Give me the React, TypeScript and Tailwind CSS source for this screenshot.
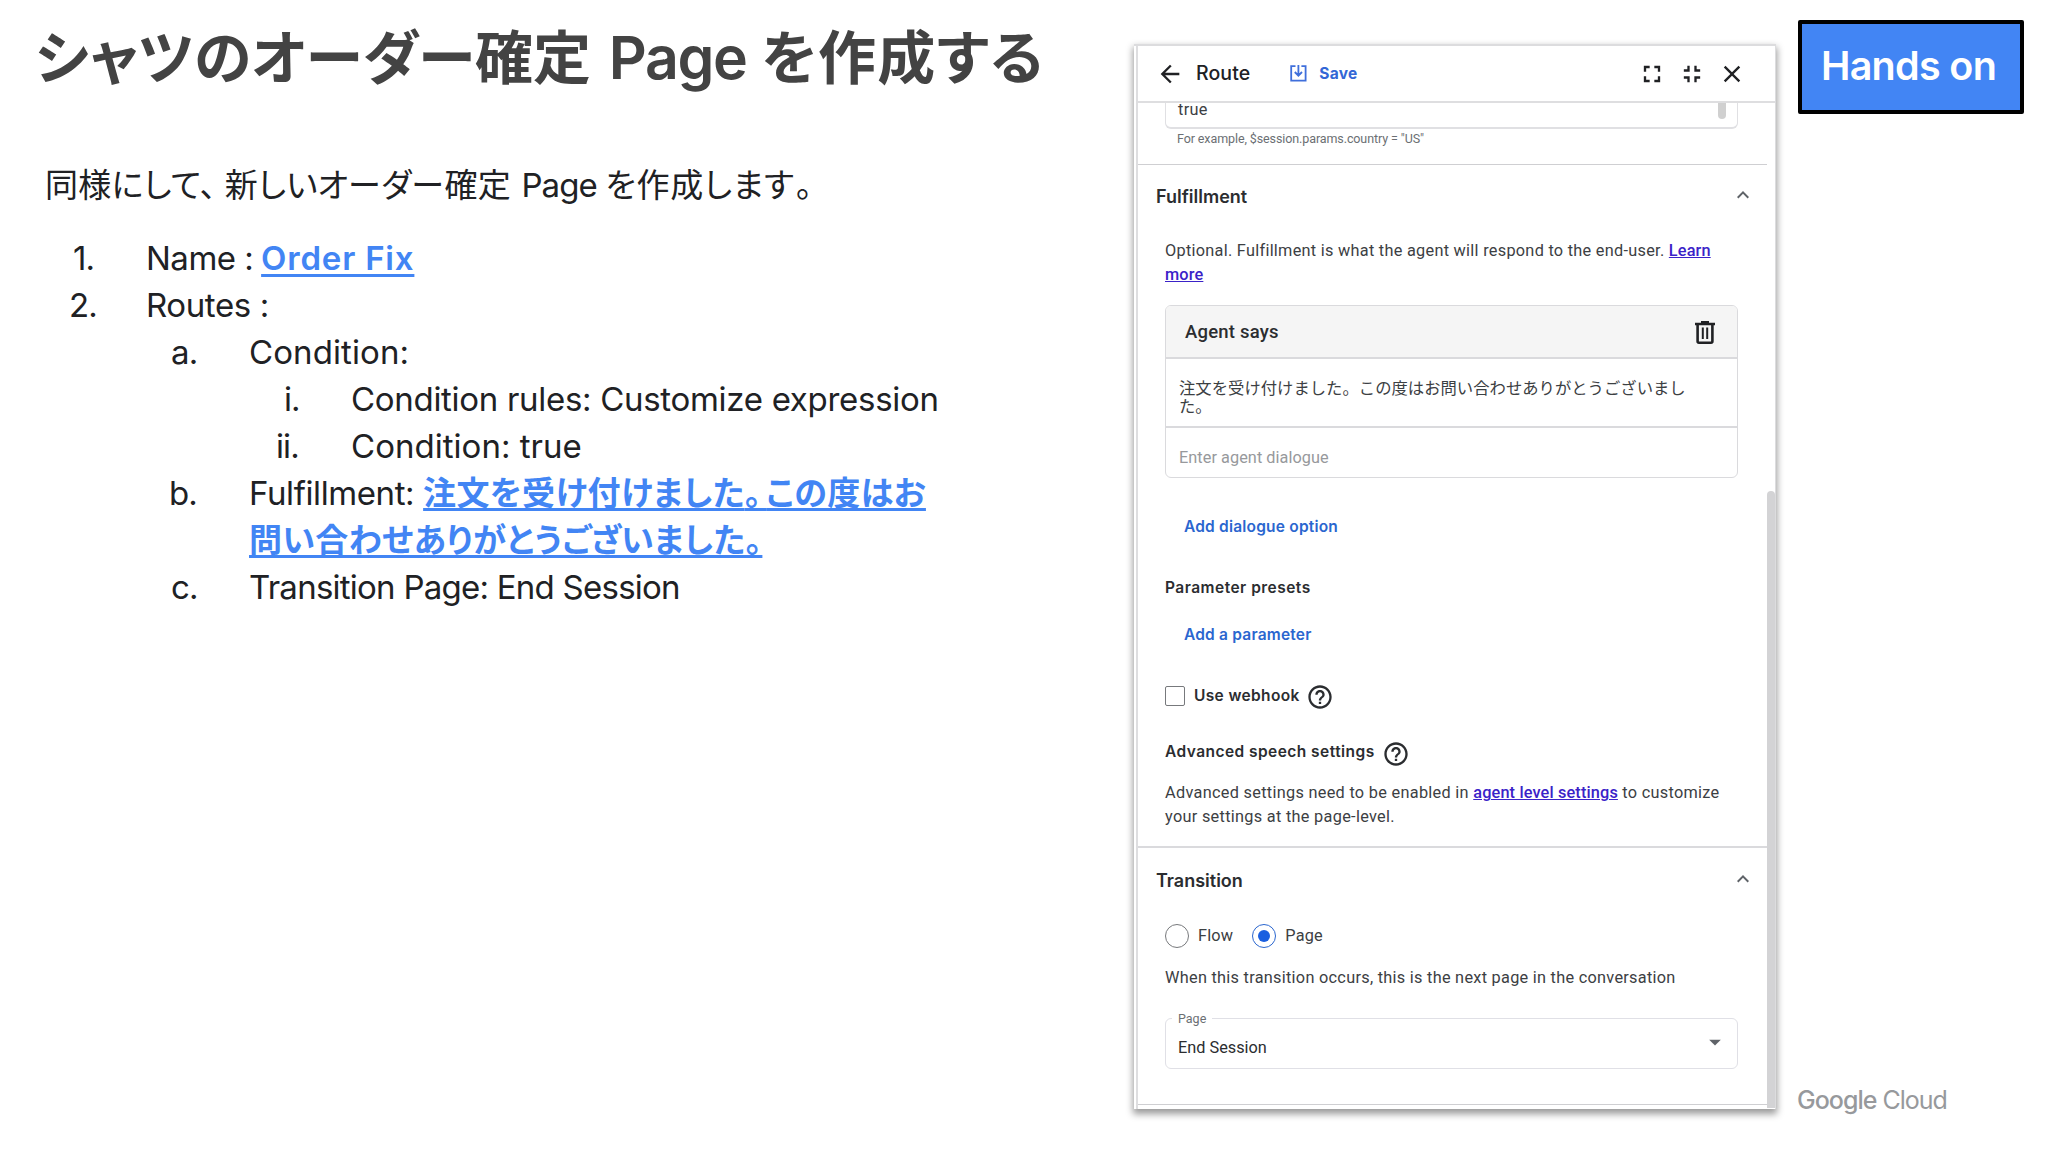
import React from 'react';
import {
  MdArrowBack,
  MdArrowDropDown,
  MdClose,
  MdExpandLess,
  MdFullscreen,
  MdFullscreenExit,
  MdHelpOutline,
} from 'react-icons/md';

interface StepProps {
  marker: string;
  markerClass: string;
  textClass?: string;
  children: React.ReactNode;
}

const Step: React.FC<StepProps> = ({ marker, markerClass, textClass = 'tracking-[-0.3px]', children }) => (
  <div className="flex text-[33px] leading-[47px] whitespace-nowrap">
    <span className={`shrink-0 tracking-[-0.9px] ${markerClass}`}>{marker}</span>
    <div className={textClass}>{children}</div>
  </div>
);

const SaveIcon = () => (
  <svg width="17" height="17" viewBox="0 0 17 17" fill="none" stroke="#3f6fdb" strokeWidth="1.8">
    <path d="M5.5 1.2H1.2v14.4h14.4V1.2h-4.2M8.4 0v10.5M4.8 7l3.6 3.7L12 7" />
  </svg>
);

const TrashIcon = () => (
  <svg width="20" height="23" viewBox="0 0 20 23" fill="none" stroke="#202124" strokeWidth="2.6">
    <path d="M0 3h20M6 1.2h8M2.6 3v17.3q0 1.4 1.4 1.4h12q1.4 0 1.4-1.4V3" />
    <path d="M7.8 6.5v11.5M12.2 6.5v11.5" strokeWidth="2" />
  </svg>
);

const SectionTitle: React.FC<{ title: string }> = ({ title }) => (
  <div className="flex h-6 justify-between pl-[18px] pr-[12px]">
    <h2 className="font-[Inter,sans-serif] text-[18px] font-semibold leading-6 text-[#2b2d30]">{title}</h2>
    <MdExpandLess className="-mt-[2px] size-6 text-[#5f6368]" />
  </div>
);

const RoutePanel = () => (
  <section className="mt-[44px] h-[1065px] w-[642px] shrink-0 overflow-hidden border-t-2 border-r border-[#dcdcde] bg-white pl-[2px] font-[Roboto,sans-serif] text-[16.3px] text-[#3c4043] shadow-[0_4px_7px_1px_rgba(0,0,0,0.4)]">
    <div className="h-full border-l-2 border-[#dedee0]">
      <header className="flex h-[57px] items-center border-b-2 border-[#dedee0] pl-[18px] pr-[29px] text-[#202124]">
        <MdArrowBack className="size-7" />
        <span className="ml-[12px] font-[Inter,sans-serif] text-[19.5px] font-medium tracking-[0.1px]">Route</span>
        <span className="ml-[40px]"><SaveIcon /></span>
        <span className="ml-3 font-[Inter,sans-serif] text-[15.5px] font-bold tracking-[0.3px] text-[#3367d6]">Save</span>
        <div className="ml-auto flex items-center gap-[12px]">
          <MdFullscreen className="size-7" />
          <MdFullscreenExit className="size-7" />
          <MdClose className="size-7" />
        </div>
      </header>

      <div className="flex h-[1005px]">
        <div className="w-[629px] shrink-0">
          <div className="ml-[27px] flex h-[26px] w-[573px] justify-between overflow-hidden rounded-b-md border-x border-b-2 border-[#e0e0e3] pl-3 pr-[11px]">
            <span className="-mt-[5px] leading-6 tracking-[0.3px]">true</span>
            <span className="h-4 w-2 rounded-b bg-[#d0d0d0]" />
          </div>
          <p className="ml-[39px] text-[12.5px] leading-5 tracking-[-0.1px] text-[#6b6f73]">For example, $session.params.country = "US"</p>
          <div className="mt-[15px] mb-[20px] h-px bg-[#cfcfd2]" />

          <SectionTitle title="Fulfillment" />

          <p className="ml-[27px] mt-[30px] w-[570px] leading-[23.7px] tracking-[0.28px]">
            Optional. Fulfillment is what the agent will respond to the end-user.{' '}
            <a className="font-medium tracking-[0.15px] text-[#3a22c8] underline">Learn<br />more</a>
          </p>

          <div className="ml-[27px] mt-[19px] h-[173px] w-[573px] overflow-hidden rounded-md border-[1.5px] border-[#dadadd]">
            <div className="flex h-[53px] items-center justify-between border-b-2 border-[#dadadd] bg-[#f5f5f5] pl-[19px] pr-[22px] pt-px">
              <span className="text-[18.5px] font-medium tracking-[0.2px] text-[#2b2d30]">Agent says</span>
              <TrashIcon />
            </div>
            <div className="h-[69px] border-b-2 border-[#dadadd] pl-[13px] pt-[19px] font-['Noto_Sans_CJK_JP',sans-serif] text-[16.35px] leading-[18px]">
              注文を受け付けました。この度はお問い合わせありがとうございまし<br />た。
            </div>
            <div className="pl-[13px] pt-[18px] leading-6 tracking-[0.05px] text-[#97999c]">Enter agent dialogue</div>
          </div>

          <div className="ml-[46px] mt-[37px] leading-6 font-[Inter,sans-serif] text-[15.5px] font-semibold tracking-[0.2px] text-[#2a66cf]">Add dialogue option</div>
          <div className="ml-[27px] mt-[37px] leading-6 font-[Inter,sans-serif] text-[15.5px] font-semibold tracking-[0.48px] text-[#2b2d30]">Parameter presets</div>
          <div className="ml-[46px] mt-[23px] leading-6 font-[Inter,sans-serif] text-[15.5px] font-semibold tracking-[0.2px] text-[#2a66cf]">Add a parameter</div>

          <div className="ml-[27px] mt-[37px] flex h-6 items-center font-[Inter,sans-serif] text-[15.5px] font-semibold tracking-[0.35px] text-[#2b2d30]">
            <span className="size-[20px] rounded-[2px] border-[1.5px] border-[#77797c]" />
            <span className="ml-[9px] leading-6">Use webhook</span>
            <MdHelpOutline className="ml-[6px] mt-[2px] size-7 shrink-0" />
          </div>
          <div className="ml-[27px] mt-[32px] flex h-6 items-center font-[Inter,sans-serif] text-[15.5px] font-semibold tracking-[0.45px] text-[#2b2d30]">
            <span className="leading-6">Advanced speech settings</span>
            <MdHelpOutline className="ml-[7px] mt-[3px] size-7 shrink-0" />
          </div>
          <p className="ml-[27px] mt-[17px] w-[570px] leading-[23.7px] tracking-[0.3px]">
            Advanced settings need to be enabled in{' '}
            <a className="font-medium tracking-[0.15px] text-[#3a22c8] underline">agent level settings</a> to customize<br />your settings at the page-level.
          </p>
          <div className="mt-[17px] mb-[21px] h-[2px] bg-[#dadadd]" />

          <SectionTitle title="Transition" />

          <div className="ml-[27px] mt-[31px] flex h-6 items-center tracking-[0.2px]">
            <span className="size-6 rounded-full border-[1.5px] border-[#77797c]" />
            <span className="ml-[9px]">Flow</span>
            <span className="ml-[19px] flex size-6 items-center justify-center rounded-full border-[1.5px] border-[#2a66cf]">
              <span className="size-3 rounded-full bg-[#1a5fe0]" />
            </span>
            <span className="ml-[9px]">Page</span>
          </div>
          <p className="ml-[27px] mt-[18px] leading-6 tracking-[0.28px]">
            When this transition occurs, this is the next page in the conversation
          </p>
          <div className="relative ml-[27px] mt-[28px] flex h-[51px] w-[573px] items-center justify-between rounded-md border-[1.5px] border-[#e0e0e6] pl-3 pr-[8px]">
            <span className="absolute -top-[8px] left-[6px] bg-white px-[6px] text-[12.5px] leading-4 text-[#6b6f73]">Page</span>
            <span className="mt-[9px] text-[#2b2d30]">End Session</span>
            <MdArrowDropDown className="-mt-[3px] size-7 text-[#5f6368]" />
          </div>
          <div className="mt-[35px] h-px bg-[#cfcfd2]" />
        </div>
        <div className="mt-[388px] w-[10px] rounded-t-md bg-[#d3d3d5]" />
      </div>
    </div>
  </section>
);

const App: React.FC = () => {
  return (
    <main className="flex h-[1152px] w-[2048px] overflow-hidden bg-white font-[Inter,sans-serif] text-[#202124]">
      <div className="w-[1134px] shrink-0">
        <h1 className="ml-[35px] mt-[16px] h-[84px] whitespace-nowrap text-[59px] font-semibold leading-[84px] tracking-[-1.3px] text-[#434343]">
          <span className="mr-1 font-['Noto_Sans_CJK_JP',sans-serif] text-[58px] font-bold leading-none tracking-normal [font-feature-settings:'palt']">シャツのオーダー確定</span>
          {' '}Page{' '}
          <span className="ml-px font-['Noto_Sans_CJK_JP',sans-serif] text-[58px] font-bold leading-none tracking-[1.2px] [font-feature-settings:'palt']">を作成する</span>
        </h1>
        <p className="ml-[45px] mt-[62px] whitespace-nowrap text-[33px] leading-[47px] tracking-[-0.9px]">
          <span className="mr-[2px] font-['Noto_Sans_CJK_JP',sans-serif] text-[33px] leading-none tracking-[0.3px] [font-feature-settings:'palt']">
            同様にして<span className="mr-[8px]">、</span>新しいオーダー確定
          </span>
          {' '}Page{' '}
          <span className="font-['Noto_Sans_CJK_JP',sans-serif] text-[33px] leading-none tracking-[0.8px] [font-feature-settings:'palt']">
            を作成します<span className="ml-px">。</span>
          </span>
        </p>

        <div className="mt-[26px]">
          <Step marker="1." markerClass="ml-[73px] w-[73px]" textClass="tracking-[-0.5px]">
            Name : <b className="-ml-px font-semibold tracking-[0.8px] text-[#4285f4] underline decoration-3 underline-offset-4">Order Fix</b>
          </Step>
          <Step marker="2." markerClass="ml-[69px] w-[77px]" textClass="tracking-[-0.4px]">Routes :</Step>
          <Step marker="a." markerClass="ml-[171px] w-[78px]" textClass="tracking-[0.1px]">Condition:</Step>
          <Step marker="i." markerClass="ml-[284px] w-[67px]">Condition rules: Customize expression</Step>
          <Step marker="ii." markerClass="ml-[276px] w-[75px]" textClass="tracking-[0.03px]">Condition: true</Step>
          <Step marker="b." markerClass="ml-[169px] w-[80px]" textClass="tracking-[-0.4px]">
            Fulfillment:{' '}
            <b className="font-['Noto_Sans_CJK_JP',sans-serif] text-[33px] leading-none tracking-[0.4px] text-[#4285f4] underline decoration-3 underline-offset-3 [font-feature-settings:'palt'] [text-decoration-skip-ink:none]">
              注文を受け付けました<span className="tracking-[5px]">。</span>この度はお<br />問い合わせありがとうございました。
            </b>
          </Step>
          <Step marker="c." markerClass="ml-[171px] w-[78px]" textClass="tracking-[-0.75px]">Transition Page: End Session</Step>
        </div>
      </div>

      <RoutePanel />

      <div className="ml-[22px] flex w-[226px] shrink-0 flex-col">
        <div className="mt-5 flex h-[94px] items-center justify-center rounded-[2px] border-4 border-black bg-[#4285f4] pr-[5px] text-[39.5px] font-semibold tracking-[-0.7px] text-white">
          Hands on
        </div>
        <div className="mt-auto mb-[36px] -ml-px whitespace-nowrap text-[25px] leading-8 tracking-[-1px] text-[#97999c]">
          <span className="font-medium">Google</span> Cloud
        </div>
      </div>
    </main>
  );
};

export default App;
